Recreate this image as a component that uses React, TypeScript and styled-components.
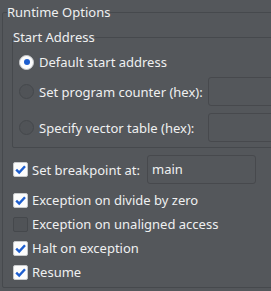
import React from "react";
import styled, { createGlobalStyle } from "styled-components";

const Global = createGlobalStyle`
  html, body { margin: 0; padding: 0; background: #54575b; overflow: hidden; }
  body { font-family: "Noto Sans", "DejaVu Sans", sans-serif; font-size: 13px; color: #eff0f1; }
  * { box-sizing: border-box; }
`;

const Page = styled.div`
  width: 271px;
  height: 291px;
  overflow: hidden;
  padding: 3px 0 0 2px;
`;

const Group = styled.fieldset<{ $w: number }>`
  margin: 0;
  padding: 0;
  width: ${(p) => p.$w}px;
  border: 1px solid #46494d;
  border-radius: 2px;
  min-width: 0;
`;

const Legend = styled.legend<{ $offset: number }>`
  padding: 0;
  margin-left: ${(p) => p.$offset}px;
  line-height: 18px;
  height: 18px;
  white-space: nowrap;
`;

const OuterBody = styled.div`
  padding: 7px 0 3px 9px;
  display: flex;
  flex-direction: column;
`;

const InnerBody = styled.div`
  padding: 5px 0 5px 6px;
  display: grid;
  grid-template-columns: 189px 120px;
  align-items: center;
`;

const RadioRow = styled.label<{ $h: number; $mt: number }>`
  display: flex;
  align-items: center;
  gap: 5px;
  height: ${(p) => p.$h}px;
  margin-top: ${(p) => p.$mt}px;
  white-space: nowrap;
`;

const RadioDot = styled.span<{ $on?: boolean }>`
  width: 15px;
  height: 15px;
  border-radius: 50%;
  flex: none;
  display: flex;
  align-items: center;
  justify-content: center;
  background: ${(p) => (p.$on ? "#fcfcfc" : "#505357")};
  border: 1px solid ${(p) => (p.$on ? "#c8cacc" : "#45484c")};
  &::after {
    content: "";
    display: ${(p) => (p.$on ? "block" : "none")};
    width: 6px;
    height: 6px;
    border-radius: 50%;
    background: #1d5ecf;
  }
`;

const TextBox = styled.div<{ $w: number; $mt?: number }>`
  width: ${(p) => p.$w}px;
  height: 29px;
  margin-top: ${(p) => p.$mt ?? 0}px;
  border: 1px solid #47494d;
  border-radius: 3px;
  background: #54575b;
  padding: 0 4px;
  line-height: 27px;
  white-space: nowrap;
`;

const Section = styled.div`
  margin: 7px 0 0 1px;
  display: flex;
  flex-direction: column;
`;

const BreakRow = styled.div`
  display: flex;
  align-items: center;
  height: 29px;
  margin-bottom: 4px;
`;

const CheckRow = styled.label`
  display: flex;
  align-items: center;
  gap: 4px;
  height: 24px;
  white-space: nowrap;
`;

const BreakLabel = styled(CheckRow)`
  width: 134px;
`;

const Box = styled.span<{ $on?: boolean }>`
  width: 15px;
  height: 15px;
  flex: none;
  border-radius: 2px;
  background: ${(p) => (p.$on ? "#fcfcfc" : "#505357")};
  border: 1px solid ${(p) => (p.$on ? "#c8cacc" : "#45484c")};
  display: flex;
  align-items: center;
  justify-content: center;
`;

const Check = ({ on }: { on?: boolean }) => (
  <Box $on={on}>
    {on && (
      <svg width="13" height="13" viewBox="0 0 13 13">
        <path d="M2.2 6.6 L5.2 9.6 L11 3.2" fill="none" stroke="#1d5ecf" strokeWidth="2.4" />
      </svg>
    )}
  </Box>
);

export default function App() {
  return (
    <Page>
      <Global />
      <Group $w={320}>
        <Legend $offset={4}>Runtime Options</Legend>
        <OuterBody>
          <Group $w={300}>
            <Legend $offset={0}>Start Address</Legend>
            <InnerBody>
              <RadioRow $h={22} $mt={0}>
                <RadioDot $on />
                Default start address
              </RadioRow>
              <span />
              <RadioRow $h={29} $mt={4}>
                <RadioDot />
                Set program counter (hex):
              </RadioRow>
              <TextBox $w={120} $mt={4} />
              <RadioRow $h={29} $mt={7}>
                <RadioDot />
                Specify vector table (hex):
              </RadioRow>
              <TextBox $w={120} $mt={7} />
            </InnerBody>
          </Group>
          <Section>
            <BreakRow>
              <BreakLabel>
                <Check on />
                Set breakpoint at:
              </BreakLabel>
              <TextBox $w={109}>main</TextBox>
            </BreakRow>
            <CheckRow>
              <Check on />
              Exception on divide by zero
            </CheckRow>
            <CheckRow>
              <Check />
              Exception on unaligned access
            </CheckRow>
            <CheckRow>
              <Check on />
              Halt on exception
            </CheckRow>
            <CheckRow>
              <Check on />
              Resume
            </CheckRow>
          </Section>
        </OuterBody>
      </Group>
    </Page>
  );
}
